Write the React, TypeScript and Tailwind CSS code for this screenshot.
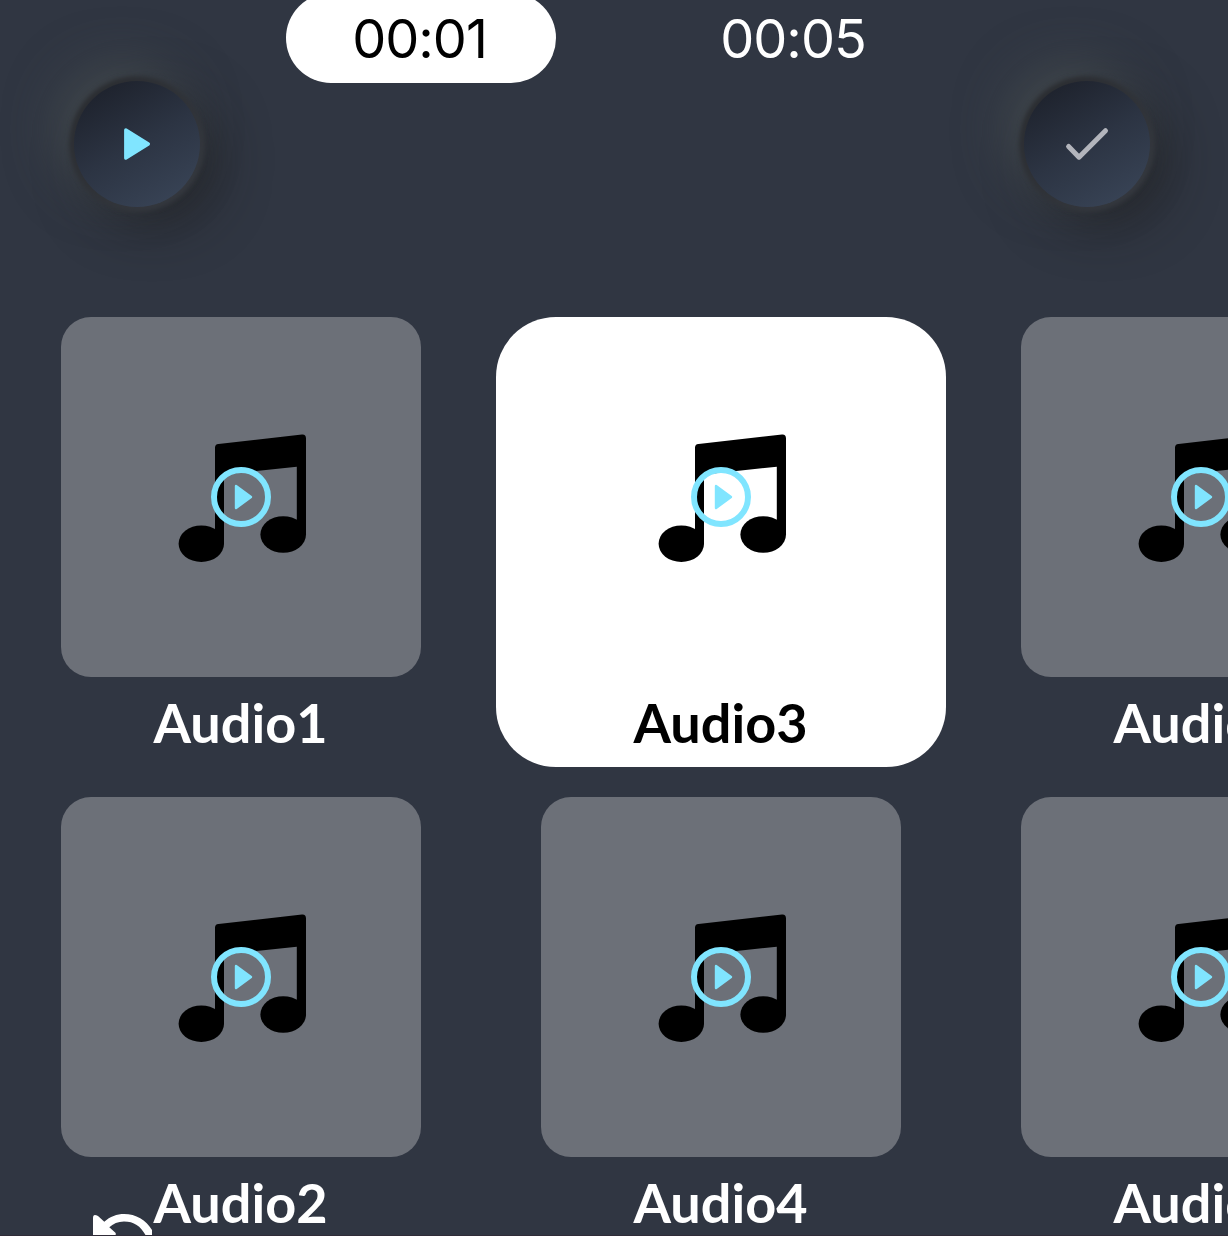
import type { ReactNode } from "react";

function RoundButton({ label, children }: { label: string; children: ReactNode }) {
  return (
    <button
      aria-label={label}
      className="relative isolate flex size-[126px] items-center justify-center rounded-full"
    >
      <span className="absolute inset-0 -z-20 rounded-full shadow-[-15px_-15px_52px_rgba(76,82,84,0.7),15px_15px_52px_rgba(26,26,26,0.68)]" />
      <span className="absolute -inset-[5px] -z-10 rounded-full bg-linear-135 from-[#292b2f] to-[#363a41] blur-[2px]" />
      <span className="absolute inset-0 -z-10 rounded-full bg-linear-150 from-[#1c202a] from-5% via-[#2c3443] via-50% to-[#3b475a]" />
      {children}
    </button>
  );
}

function MusicIcon() {
  return (
    <svg width="170" height="160" viewBox="0 0 170 160" className="mt-[103px] ml-[99px] block shrink-0">
      <path
        d="M55 27.5Q55 24.2 58.5 23.9L142 14.5Q146 14.2 146 18.5V114.5H136.8V46.7L64 54.5V124H55Z"
        fill="#000"
      />
      <ellipse cx="41.3" cy="123.7" rx="22.7" ry="18.3" fill="#000" />
      <ellipse cx="123.2" cy="114.5" rx="22.8" ry="18.3" fill="#000" />
      <circle cx="81" cy="77" r="27" fill="none" stroke="#80e5ff" strokeWidth="6" />
      <path d="M76 66L91 77L76 88Z" fill="#80e5ff" stroke="#80e5ff" strokeWidth="2.4" strokeLinejoin="round" />
    </svg>
  );
}

function AudioTile({ name, selected }: { name: string; selected?: boolean }) {
  return (
    <div
      className={
        selected
          ? "-mx-[45px] flex h-[450px] flex-col items-center rounded-[60px] bg-white text-black"
          : "flex h-[450px] flex-col items-center text-white"
      }
    >
      <div className={selected ? "flex size-[360px]" : "flex size-[360px] rounded-[30px] bg-[#6c7078]"}>
        <MusicIcon />
      </div>
      <div className="mt-[11px] -ml-px whitespace-nowrap font-['Lato','Liberation_Sans',sans-serif] text-[54px] leading-[70px] font-bold">
        {name}
      </div>
    </div>
  );
}

export default function App() {
  return (
    <div className="relative h-[1236px] w-[1228px] overflow-hidden border-b border-[#302c38] bg-[#303642]">
      <header className="flex h-[317px] items-start pl-[74px]">
        <div className="mt-[81px]">
          <RoundButton label="Play">
            <svg width="126" height="126" viewBox="0 0 126 126">
              <path d="M51.8 49L74.3 63L51.8 77Z" fill="#80e5ff" stroke="#80e5ff" strokeWidth="3.4" strokeLinejoin="round" />
            </svg>
          </RoundButton>
        </div>
        <div className="-mt-[7px] ml-[86px] flex w-[642px] font-['Inter','Liberation_Sans',sans-serif] text-[54px] tracking-[-1px]">
          <div className="flex h-[90px] w-[270px] items-center justify-center rounded-[45px] bg-white pr-[3px] text-black">
            00:01
          </div>
          <div className="ml-[102px] flex h-[90px] w-[270px] items-center justify-center text-white">00:05</div>
        </div>
        <div className="mt-[81px] ml-[96px]">
          <RoundButton label="Confirm">
            <svg width="126" height="126" viewBox="0 0 126 126">
              <path
                d="M44.6 65.5L55 76.2L81.5 49.7"
                fill="none"
                stroke="#b3b5bc"
                strokeWidth="5"
                strokeLinecap="round"
                strokeLinejoin="round"
              />
            </svg>
          </RoundButton>
        </div>
      </header>

      <main className="grid w-[1380px] grid-cols-[360px_360px_360px] gap-x-[120px] gap-y-[30px] pl-[61px]">
        <AudioTile name="Audio1" />
        <AudioTile name="Audio3" selected />
        <AudioTile name="Audio5" />
        <AudioTile name="Audio2" />
        <AudioTile name="Audio4" />
        <AudioTile name="Audio6" />
      </main>

      <svg
        aria-label="Undo"
        width="59"
        height="24"
        viewBox="0 0 59 24"
        className="absolute bottom-[-3px] left-[93px]"
      >
        <path
          d="M11.3 7.7C17 2.5 24 0 31 0C43 0 53 6 59 16V24H54C49 13 42 7.4 31 7.4C25 7.4 20 9.5 16.3 13.3L22.7 19V24H0V4Q0 -1 5 2Z"
          fill="#fff"
        />
      </svg>
    </div>
  );
}
